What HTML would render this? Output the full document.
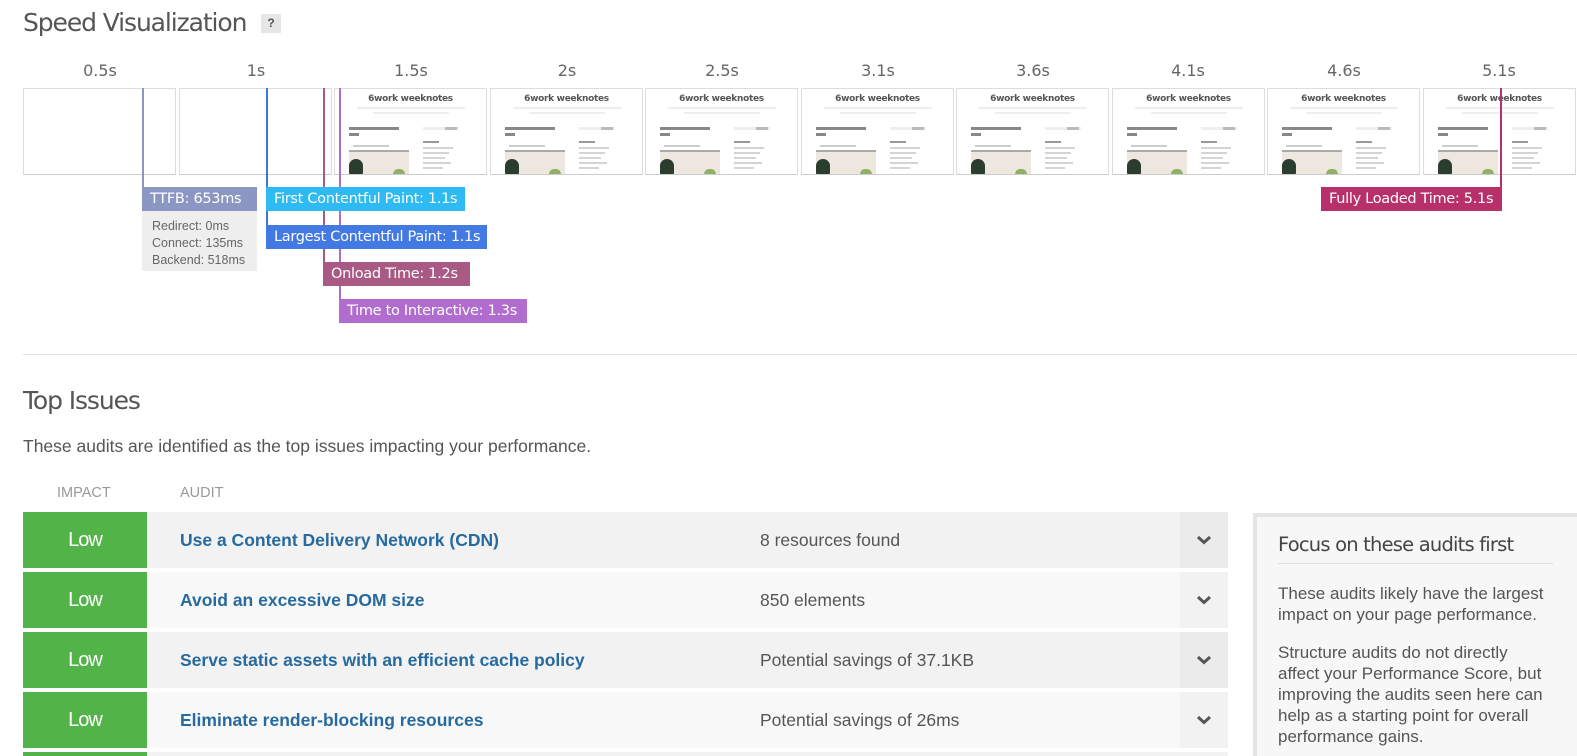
<!DOCTYPE html>
<html style="width:1577px;height:756px;overflow:hidden"><head><meta charset="utf-8"><style>
*{margin:0;padding:0;box-sizing:border-box}
body{width:1577px;height:756px;overflow:hidden;background:#fff;font-family:"Liberation Sans",sans-serif;position:relative;color:#555}
.a{position:absolute}
.h1{font-family:"DejaVu Sans","Liberation Sans",sans-serif;font-size:25px;color:#555;letter-spacing:-1.1px}
.tl{font-family:"DejaVu Sans","Liberation Sans",sans-serif;font-size:16px;color:#666;width:100px;text-align:center;top:61px}
.fr{top:88px;height:87px;width:153px;border:1px solid #ddd;border-bottom:1px solid #ccc;overflow:hidden;background:#fff}
.vl{width:2px;top:88px}
.lb{font-family:"DejaVu Sans","Liberation Sans",sans-serif;font-size:14.5px;color:#fff;height:24px;line-height:24px;padding-left:8px;letter-spacing:-0.3px}
.th .t{position:absolute;left:0;width:100%;top:5px;text-align:center;font-size:9px;font-weight:bold;color:#555;font-family:"DejaVu Sans",sans-serif;letter-spacing:-0.3px}
.th i{position:absolute;background:#e4e4e4;height:2px;display:block}
.row{position:absolute;left:23px;width:1205px;height:56px}
.row .g{position:absolute;left:0;top:0;width:124px;height:56px;background:#51b348;color:#fff;font-size:20px;text-align:center;line-height:56px;letter-spacing:-1px}
.row .n{position:absolute;left:157px;top:0;line-height:56px;font-size:17.5px;font-weight:bold;color:#266a9f}
.row .d{position:absolute;left:737px;top:0;line-height:56px;font-size:17.5px;color:#555}
.row .c{position:absolute;right:0;top:0;width:48px;height:56px;background:#ebebeb}
</style></head><body>
<div class="a h1" style="left:23px;top:8px">Speed Visualization</div>
<div class="a" style="left:261px;top:14px;width:20px;height:19px;background:#e6e6e6;color:#555;font-size:12px;font-weight:bold;text-align:center;line-height:19px">?</div>

<div class="a tl" style="left:50px">0.5s</div>
<div class="a tl" style="left:206px">1s</div>
<div class="a tl" style="left:361px">1.5s</div>
<div class="a tl" style="left:517px">2s</div>
<div class="a tl" style="left:672px">2.5s</div>
<div class="a tl" style="left:828px">3.1s</div>
<div class="a tl" style="left:983px">3.6s</div>
<div class="a tl" style="left:1138px">4.1s</div>
<div class="a tl" style="left:1294px">4.6s</div>
<div class="a tl" style="left:1449px">5.1s</div>

<div class="a fr" style="left:23px"></div>
<div class="a fr" style="left:179px"></div>
<div id="thumbs"></div>
<script>
var h='';
for(var i=2;i<10;i++){var l=Math.round(23+i*155.5);
h+='<div class="a fr th" style="left:'+l+'px"><div class="t">6work weeknotes</div>'+
'<i style="left:22px;top:18px;width:108px;background:#eee"></i><i style="left:38px;top:23px;width:76px;background:#eee"></i>'+
'<i style="left:14px;top:38px;width:50px;height:3px;background:#888"></i><i style="left:14px;top:44px;width:10px;height:3px;background:#888"></i>'+
'<i style="left:88px;top:38px;width:36px;height:3px;background:#eee"></i><i style="left:110px;top:38px;width:12px;height:3px;background:#bbb"></i>'+
'<i style="left:18px;top:56px;width:36px;background:#ccc"></i>'+
'<i style="left:88px;top:52px;width:16px;height:2px;background:#999"></i><i style="left:88px;top:58px;width:30px;background:#d4d4d4"></i><i style="left:88px;top:63px;width:26px;background:#d4d4d4"></i><i style="left:88px;top:68px;width:22px;background:#d4d4d4"></i><i style="left:88px;top:73px;width:28px;background:#d4d4d4"></i><i style="left:88px;top:78px;width:20px;background:#d4d4d4"></i>'+
'<i style="left:14px;top:61px;width:60px;height:30px;background:#ede7e0"></i><i style="left:14px;top:61px;width:60px;height:2px;background:#aaa"></i>'+
'<i style="left:14px;top:70px;width:14px;height:20px;border-radius:7px;background:#2b3d2e"></i><i style="left:58px;top:80px;width:12px;height:10px;border-radius:5px;background:#8fb065"></i>'+
'</div>';}
document.getElementById('thumbs').innerHTML=h;
</script>

<div class="a vl" style="left:142px;height:100px;background:#8b96c3"></div>
<div class="a vl" style="left:266px;height:140px;background:#4076db"></div>
<div class="a vl" style="left:323px;height:175px;background:#a85a84"></div>
<div class="a vl" style="left:339px;height:212px;background:#ad6ccb"></div>
<div class="a vl" style="left:1500px;height:100px;background:#b7306a"></div>

<div class="a lb" style="left:142px;top:187px;width:115px;background:#8b96c3">TTFB: 653ms</div>
<div class="a" style="left:142px;top:211px;width:115px;height:60px;background:#eee;color:#666;font-size:12.5px;line-height:17px;padding:7px 0 0 10px">Redirect: 0ms<br>Connect: 135ms<br>Backend: 518ms</div>
<div class="a lb" style="left:266px;top:187px;width:199px;background:#2ebaf2">First Contentful Paint: 1.1s</div>
<div class="a lb" style="left:266px;top:225px;width:221px;background:#4279e2">Largest Contentful Paint: 1.1s</div>
<div class="a lb" style="left:323px;top:262px;width:147px;background:#a85a84">Onload Time: 1.2s</div>
<div class="a lb" style="left:339px;top:299px;width:188px;background:#b16dcd">Time to Interactive: 1.3s</div>
<div class="a lb" style="left:1321px;top:187px;width:181px;background:#b7306a">Fully Loaded Time: 5.1s</div>

<div class="a" style="left:23px;top:354px;width:1554px;height:1px;background:#e2e2e2"></div>

<div class="a h1" style="left:23px;top:386px">Top Issues</div>
<div class="a" style="left:23px;top:436px;font-size:17.5px;color:#555">These audits are identified as the top issues impacting your performance.</div>
<div class="a" style="left:57px;top:485px;font-size:14.5px;color:#999">IMPACT</div>
<div class="a" style="left:180px;top:485px;font-size:14.5px;color:#999">AUDIT</div>

<svg width="0" height="0" style="position:absolute"><defs><symbol id="ch" viewBox="0 0 16 10"><path d="M2 2 L8 7.5 L14 2" fill="none" stroke="#555" stroke-width="3"/></symbol></defs></svg>

<div class="row" style="top:512px;background:#f2f2f2"><div class="g">Low</div><div class="n">Use a Content Delivery Network (CDN)</div><div class="d">8 resources found</div><div class="c"><svg class="a" style="left:16px;top:23px" width="16" height="10"><use href="#ch"/></svg></div></div>
<div class="row" style="top:572px;background:#f8f8f8"><div class="g">Low</div><div class="n">Avoid an excessive DOM size</div><div class="d">850 elements</div><div class="c" style="background:#f2f2f2"><svg class="a" style="left:16px;top:23px" width="16" height="10"><use href="#ch"/></svg></div></div>
<div class="row" style="top:632px;background:#f2f2f2"><div class="g">Low</div><div class="n">Serve static assets with an efficient cache policy</div><div class="d">Potential savings of 37.1KB</div><div class="c"><svg class="a" style="left:16px;top:23px" width="16" height="10"><use href="#ch"/></svg></div></div>
<div class="row" style="top:692px;background:#f8f8f8"><div class="g">Low</div><div class="n">Eliminate render-blocking resources</div><div class="d">Potential savings of 26ms</div><div class="c" style="background:#f2f2f2"><svg class="a" style="left:16px;top:23px" width="16" height="10"><use href="#ch"/></svg></div></div>
<div class="row" style="top:752px;height:4px;background:#f2f2f2"><div class="g" style="height:4px"></div></div>

<div class="a" style="left:1253px;top:513px;width:330px;height:243px;border:4px solid #e4e4e4;border-bottom:none;background:#f7f7f7">
<div class="a" style="left:21px;top:16px;font-family:'DejaVu Sans','Liberation Sans',sans-serif;font-size:19.5px;color:#444;letter-spacing:-0.8px">Focus on these audits first</div>
<div class="a" style="left:21px;top:46px;width:275px;height:1px;background:#ddd"></div>
<div class="a" style="left:21px;top:66px;width:280px;font-size:17px;line-height:21px;color:#555">These audits likely have the largest impact on your page performance.</div>
<div class="a" style="left:21px;top:125px;width:275px;font-size:17px;line-height:21px;color:#555">Structure audits do not directly affect your Performance Score, but improving the audits seen here can help as a starting point for overall performance gains.</div>
</div>
</body></html>
